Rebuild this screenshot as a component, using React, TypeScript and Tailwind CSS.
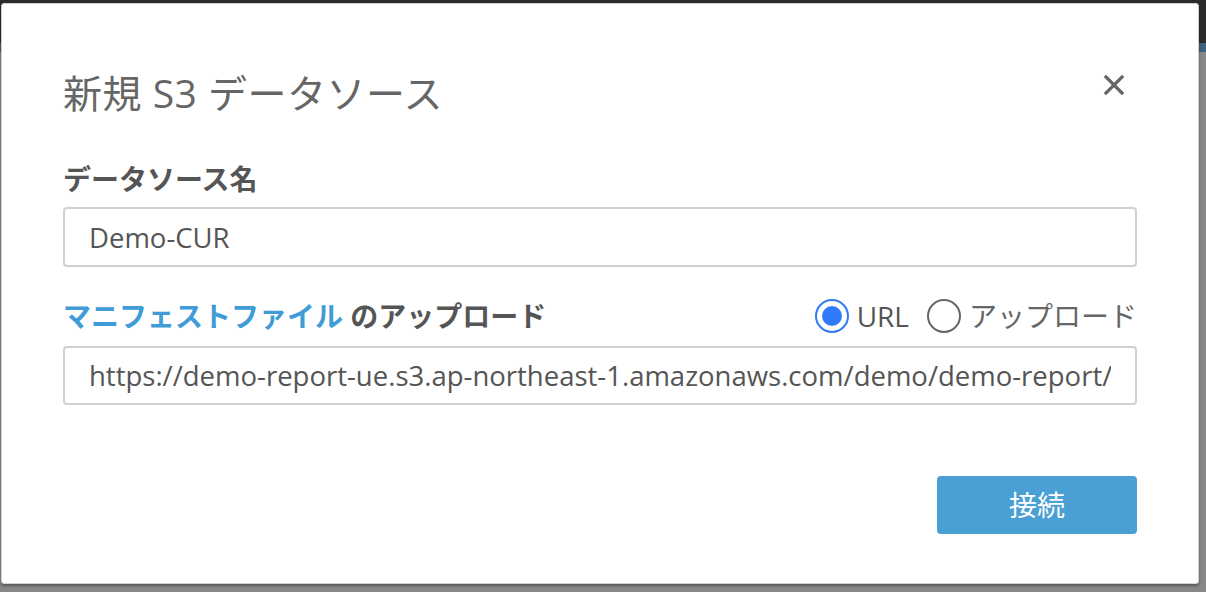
import React from "react";

const font = { fontFamily: '"Open Sans", "Noto Sans CJK JP", sans-serif' };

function Radio({ checked, label }: { checked: boolean; label: string }) {
  return (
    <label className="flex items-center gap-[8px] cursor-pointer">
      {checked ? (
        <span className="w-[34px] h-[34px] rounded-full border-[2px] border-[#2f7bf5] flex items-center justify-center">
          <span className="w-[20px] h-[20px] rounded-full bg-[#2f7bf5]" />
        </span>
      ) : (
        <span className="w-[34px] h-[34px] rounded-full border-[2px] border-[#666]" />
      )}
      <span className={checked ? "text-[28px] font-medium text-[#555]" : "text-[28px] text-[#666]"}>{label}</span>
    </label>
  );
}

export default function App() {
  return (
    <div
      className="w-[1206px] h-[592px] overflow-hidden bg-[linear-gradient(to_bottom,#2b2b2b_0px,#2b2b2b_43px,#3b6080_43px,#3b6080_52px,#888888_52px)]"
      style={font}
    >
      <div className="pt-[3px] pl-[1px]">
        {/* Dialog */}
        <div className="w-[1198px] h-[581px] bg-white rounded-[3px] border border-[#d0d0d0] shadow-[0_2px_3px_rgba(0,0,0,0.35)] px-[61px] pt-[58px]">
          <div className="flex items-center justify-between h-[60px]">
            <h2 className="text-[39px] text-[#666] leading-none tracking-[0.5px]">新規 S3 データソース</h2>
            <button className="w-[26px] h-[26px] flex items-center justify-center mr-[10px] -mt-[14px]">
              <svg width="22" height="22" viewBox="0 0 22 22">
                <path d="M3 3 L19 19 M19 3 L3 19" stroke="#666" strokeWidth="3.2" strokeLinecap="square" />
              </svg>
            </button>
          </div>

          <div className="mt-[37px] text-[28px] font-bold text-[#555] leading-[40px]">データソース名</div>
          <input
            readOnly
            value="Demo-CUR"
            className="mt-[8px] w-full h-[60px] border-[2px] border-[#d0d0d0] rounded-[4px] px-[24px] text-[27.5px] text-[#555] outline-none"
          />

          <div className="mt-[29px] flex items-center justify-between h-[40px]">
            <div className="text-[28px] font-bold text-[#555]">
              <span className="text-[#3f9cd6]">マニフェストファイル</span> のアップロード
            </div>
            <div className="flex items-center gap-[18px]">
              <Radio checked label="URL" />
              <Radio checked={false} label="アップロード" />
            </div>
          </div>
          <input
            readOnly
            value="https://demo-report-ue.s3.ap-northeast-1.amazonaws.com/demo/demo-report/"
            className="mt-[10px] w-full h-[59px] border-[2px] border-[#d0d0d0] rounded-[4px] px-[24px] text-[27.5px] text-[#555] outline-none"
          />

          <div className="mt-[71px] flex justify-end">
            <button className="w-[200px] h-[58px] rounded-[4px] bg-[#4a9fd5] text-white text-[28px]">接続</button>
          </div>
        </div>
      </div>
    </div>
  );
}
